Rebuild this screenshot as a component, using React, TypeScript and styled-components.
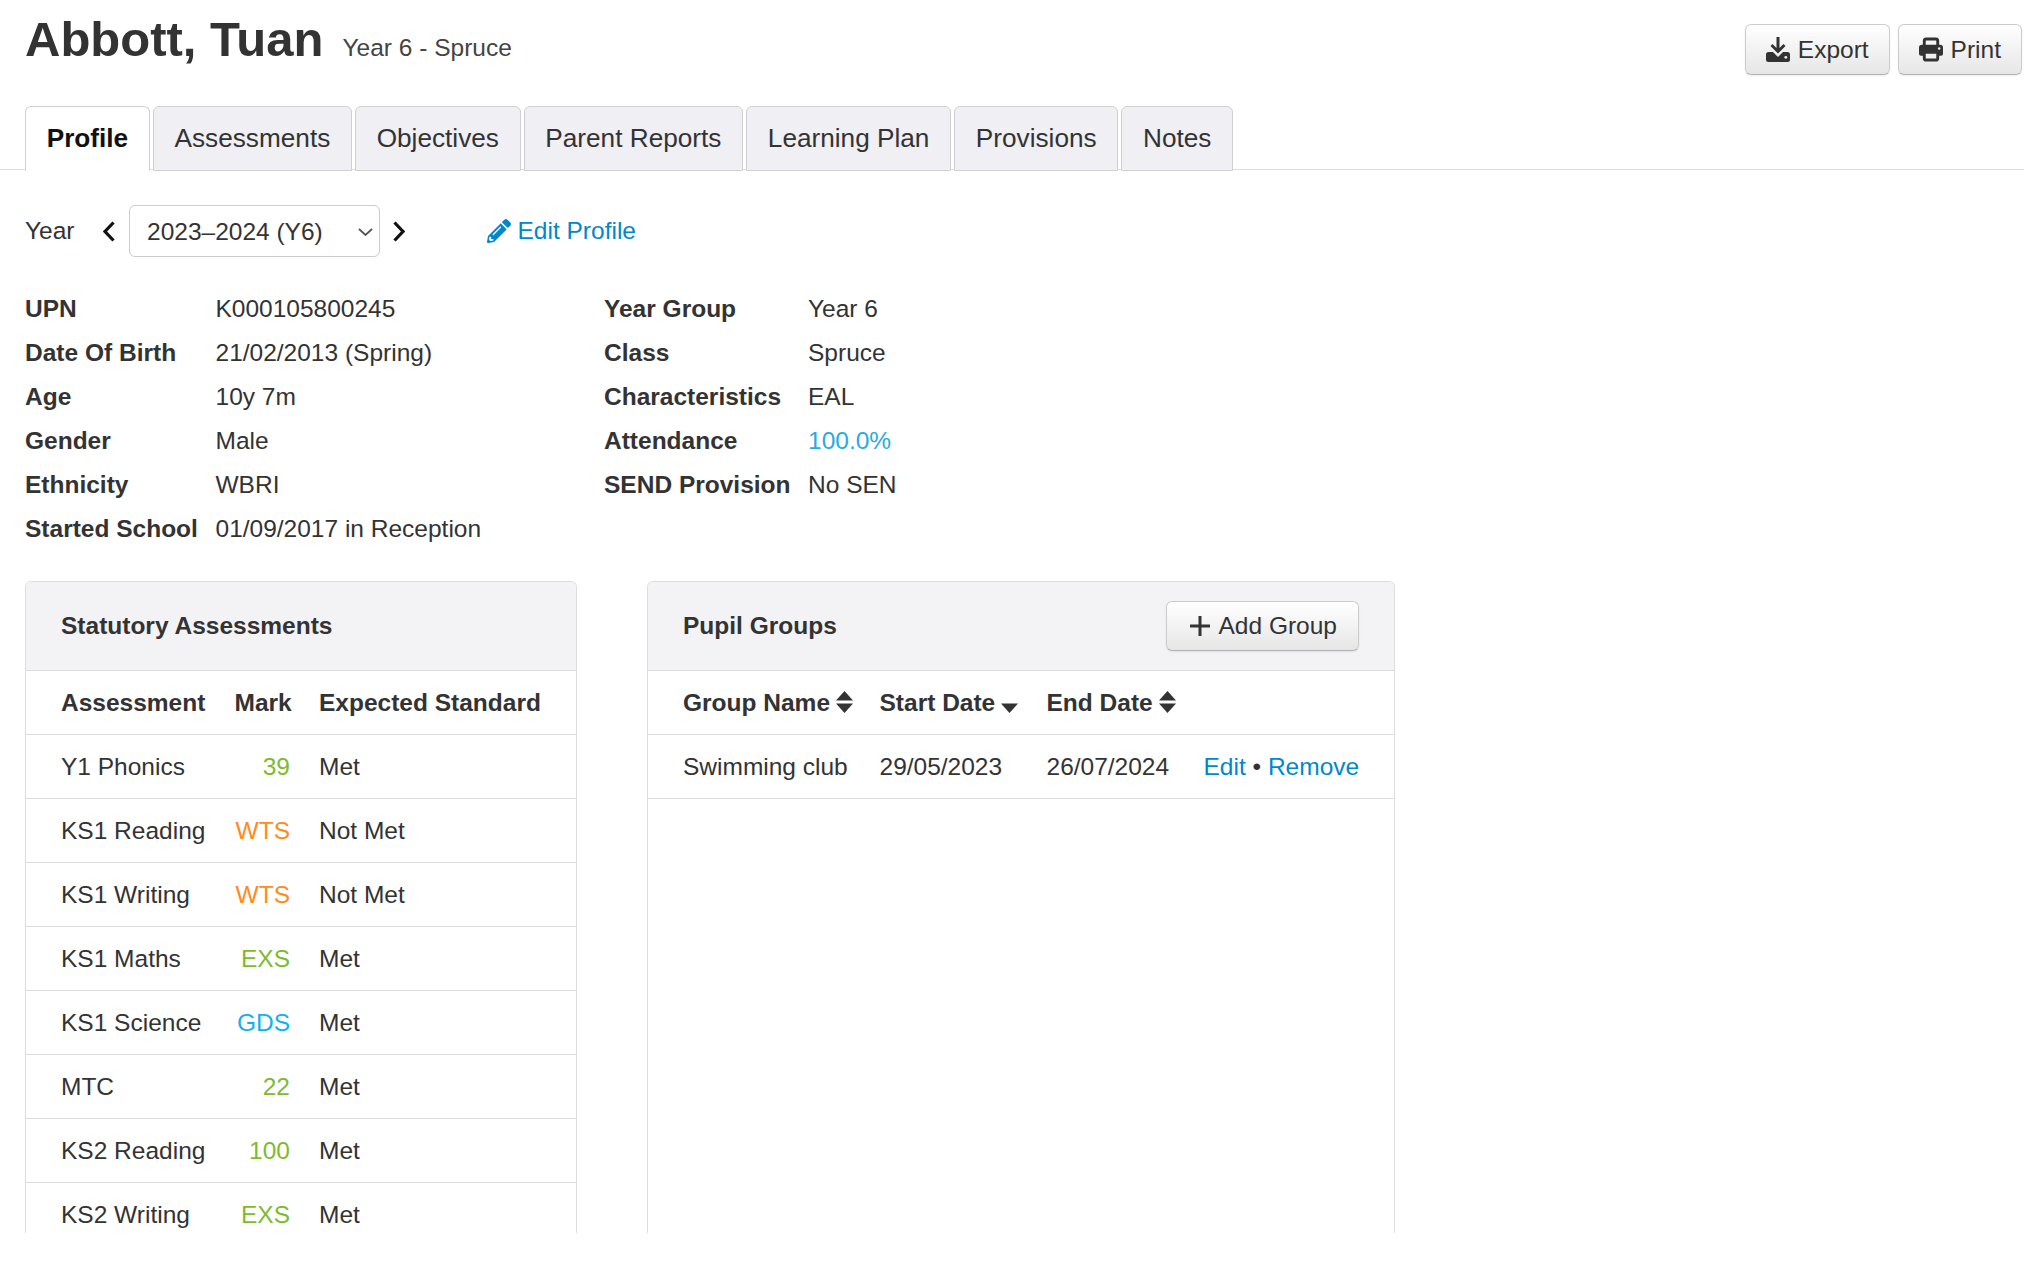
import { createGlobalStyle, styled } from "styled-components"
import { FaPencilAlt } from "react-icons/fa"

const GlobalStyle = createGlobalStyle`
  html, body {
    margin: 0;
    background: #fff;
    overflow: hidden;
  }
  body {
    font-family: "Liberation Sans", Arial, sans-serif;
    font-size: 24.5px;
    color: #333;
  }
`

const tabs = ["Profile", "Assessments", "Objectives", "Parent Reports", "Learning Plan", "Provisions", "Notes"]

const leftInfo = [
  ["UPN", "K000105800245"],
  ["Date Of Birth", "21/02/2013 (Spring)"],
  ["Age", "10y 7m"],
  ["Gender", "Male"],
  ["Ethnicity", "WBRI"],
  ["Started School", "01/09/2017 in Reception"],
]

const rightInfo = [
  ["Year Group", "Year 6"],
  ["Class", "Spruce"],
  ["Characteristics", "EAL"],
  ["Attendance", "100.0%"],
  ["SEND Provision", "No SEN"],
]

const assessments = [
  { name: "Y1 Phonics", mark: "39", tone: "green", standard: "Met" },
  { name: "KS1 Reading", mark: "WTS", tone: "orange", standard: "Not Met" },
  { name: "KS1 Writing", mark: "WTS", tone: "orange", standard: "Not Met" },
  { name: "KS1 Maths", mark: "EXS", tone: "green", standard: "Met" },
  { name: "KS1 Science", mark: "GDS", tone: "blue", standard: "Met" },
  { name: "MTC", mark: "22", tone: "green", standard: "Met" },
  { name: "KS2 Reading", mark: "100", tone: "green", standard: "Met" },
  { name: "KS2 Writing", mark: "EXS", tone: "green", standard: "Met" },
]

const DownloadIcon = () => (
  <svg width="24" height="25" viewBox="0 0 24 25">
    <path fill="currentColor" d="M10.5 0h3v11l4-4 2 2-7.5 7.5L4.5 9l2-2 4 4z" />
    <path fill="currentColor" d="M2.5 15H7l5 5 5-5h4.5a2.5 2.5 0 0 1 2.5 2.5v5a2.5 2.5 0 0 1-2.5 2.5h-19A2.5 2.5 0 0 1 0 22.5v-5A2.5 2.5 0 0 1 2.5 15z" />
    <circle cx="19.8" cy="20.3" r="1.4" fill="#f2f2f2" />
  </svg>
)

const PrintIcon = () => (
  <svg width="24" height="25" viewBox="0 0 25 25">
    <path fill="none" stroke="currentColor" strokeWidth="3" d="M5.5 9V3.5a2 2 0 0 1 2-2h10a2 2 0 0 1 2 2V9" />
    <path fill="currentColor" d="M3 7.5h19a3 3 0 0 1 3 3V17a2 2 0 0 1-2 2H2a2 2 0 0 1-2-2v-6.500a3 3 0 0 1 3-3z" />
    <path fill="#f0f0f0" stroke="currentColor" strokeWidth="3" d="M5.500 15.500h14v6a2 2 0 0 1-2 2h-10a2 2 0 0 1-2-2z" />
    <circle cx="21" cy="11.500" r="1.300" fill="#f0f0f0" />
  </svg>
)

const PlusIcon = () => (
  <svg width="20" height="20" viewBox="0 0 20 20">
    <path stroke="currentColor" strokeWidth="3" d="M0 10h20M10 0v20" />
  </svg>
)

const Chevron = ({ dir }: { dir: "left" | "right" }) => (
  <svg width="12" height="21" viewBox="0 0 12 21">
    <polyline
      fill="none"
      stroke="#111"
      strokeWidth="3.2"
      points={dir === "left" ? "10.5,1.5 2,10.5 10.5,19.5" : "1.5,1.5 10,10.5 1.5,19.5"}
    />
  </svg>
)

const SortIcon = ({ only }: { only?: boolean }) => (
  <SortSvg width="17" height="22" viewBox="0 0 17 22">
    {!only && <path fill="#333" d="M8.500 0l8.500 9.500H0z" />}
    <path fill="#333" d="M0 12.500h17L8.500 22z" />
  </SortSvg>
)

export default function App() {
  return (
    <Page>
      <GlobalStyle />
      <Header>
        <Title>Abbott, Tuan</Title>
        <Subtitle>Year 6 - Spruce</Subtitle>
        <Actions>
          <Button><DownloadIcon />Export</Button>
          <Button><PrintIcon />Print</Button>
        </Actions>
      </Header>

      <TabBar>
        {tabs.map((tab, index) => (
          <Tab key={tab} $active={index === 0}>{tab}</Tab>
        ))}
      </TabBar>

      <YearRow>
        <YearLabel>Year</YearLabel>
        <Chevron dir="left" />
        <SelectWrap>
          <YearSelect defaultValue="2023">
            <option value="2023">2023–2024 (Y6)</option>
          </YearSelect>
          <SelectArrow width="15" height="8" viewBox="0 0 15 8">
            <polyline fill="none" stroke="#555" strokeWidth="1.8" points="1,1 7.500,7 14,1" />
          </SelectArrow>
        </SelectWrap>
        <Chevron dir="right" />
        <EditLink href="#"><FaPencilAlt size={24} />Edit Profile</EditLink>
      </YearRow>

      <InfoRow>
        <InfoList $labelWidth={190.5} $width={579}>
          {leftInfo.map(([label, value]) => (
            <InfoItem key={label}>
              <dt>{label}</dt>
              <dd>{value}</dd>
            </InfoItem>
          ))}
        </InfoList>
        <InfoList $labelWidth={204}>
          {rightInfo.map(([label, value]) => (
            <InfoItem key={label}>
              <dt>{label}</dt>
              <dd>{label === "Attendance" ? <Attendance>{value}</Attendance> : value}</dd>
            </InfoItem>
          ))}
        </InfoList>
      </InfoRow>

      <Panels>
        <Panel $width={552}>
          <PanelHeader>
            <PanelTitle>Statutory Assessments</PanelTitle>
          </PanelHeader>
          <AssessmentTable>
            <thead>
              <tr>
                <th>Assessment</th>
                <th>Mark</th>
                <th>Expected Standard</th>
              </tr>
            </thead>
            <tbody>
              {assessments.map((row) => (
                <tr key={row.name}>
                  <td>{row.name}</td>
                  <td><Mark $tone={row.tone}>{row.mark}</Mark></td>
                  <td>{row.standard}</td>
                </tr>
              ))}
            </tbody>
          </AssessmentTable>
        </Panel>

        <Panel $width={748}>
          <PanelHeader>
            <PanelTitle>Pupil Groups</PanelTitle>
            <AddButton><PlusIcon />Add Group</AddButton>
          </PanelHeader>
          <GroupTable>
            <thead>
              <tr>
                <th>Group Name<SortIcon /></th>
                <th>Start Date<SortIcon only /></th>
                <th>End Date<SortIcon /></th>
                <th></th>
              </tr>
            </thead>
            <tbody>
              <tr>
                <td>Swimming club</td>
                <td>29/05/2023</td>
                <td>26/07/2024</td>
                <td><TableLink href="#">Edit</TableLink> • <TableLink href="#">Remove</TableLink></td>
              </tr>
            </tbody>
          </GroupTable>
        </Panel>
      </Panels>
    </Page>
  )
}

const Page = styled.div`
  height: 1233px;
  display: flex;
  flex-direction: column;
  overflow: hidden;
`

const Header = styled.header`
  display: flex;
  align-items: baseline;
  height: 106px;
  padding: 9px 2px 0 25px;
  box-sizing: border-box;
`

const Title = styled.h1`
  margin: 0;
  font-size: 49px;
  line-height: 60px;
  font-weight: 700;
  color: #333;
`

const Subtitle = styled.span`
  margin-left: 19px;
  font-size: 24.5px;
  color: #444;
`

const Actions = styled.div`
  display: flex;
  gap: 8px;
  margin-left: auto;
  align-self: flex-start;
  margin-top: 15px;
`

const Button = styled.button`
  display: flex;
  align-items: center;
  gap: 8px;
  height: 51px;
  padding: 0 20px;
  border: 1px solid #ccc;
  border-bottom-color: #b3b3b3;
  border-radius: 6px;
  background: linear-gradient(#fff, #e6e6e6);
  box-shadow: 0 1px 2px rgba(0, 0, 0, 0.08);
  font: inherit;
  color: #333;
`

const TabBar = styled.nav`
  display: flex;
  gap: 3px;
  height: 63px;
  padding-left: 25px;
  border-bottom: 1px solid #ddd;
  flex-shrink: 0;
`

const Tab = styled.div<{ $active?: boolean }>`
  display: flex;
  align-items: center;
  height: 65px;
  box-sizing: border-box;
  padding: 0 20.7px;
  border: 1px solid #d0d0d4;
  border-bottom-color: ${(p) => (p.$active ? "#fff" : "#d0d0d4")};
  border-radius: 6px 6px 0 0;
  background: ${(p) => (p.$active ? "#fff" : "#efeff4")};
  font-size: 26.2px;
  font-weight: ${(p) => (p.$active ? 700 : 400)};
  color: ${(p) => (p.$active ? "#111" : "#333")};
`

const YearRow = styled.div`
  display: flex;
  align-items: center;
  height: 52px;
  margin-top: 35px;
  padding-left: 25px;
  flex-shrink: 0;
`

const YearLabel = styled.span`
  width: 78px;
`

const SelectWrap = styled.div`
  position: relative;
  width: 251px;
  height: 52px;
  margin: 0 13px 0 14px;
`

const YearSelect = styled.select`
  appearance: none;
  width: 100%;
  height: 100%;
  padding: 0 17px;
  border: 1px solid #ccc;
  border-radius: 6px;
  background: #fff;
  font: inherit;
  color: #333;
`

const SelectArrow = styled.svg`
  position: absolute;
  top: 23px;
  right: 7px;
  pointer-events: none;
`

const EditLink = styled.a`
  display: flex;
  align-items: center;
  gap: 6.5px;
  margin-left: 82px;
  color: #0088cc;
  text-decoration: none;
`

const InfoRow = styled.div`
  display: flex;
  margin-top: 30px;
  padding-left: 25px;
  flex-shrink: 0;
`

const InfoList = styled.dl<{ $labelWidth: number; $width?: number }>`
  display: grid;
  grid-template-columns: ${(p) => p.$labelWidth}px auto;
  grid-auto-rows: 44px;
  align-content: start;
  margin: 0;
  ${(p) => (p.$width ? `width: ${p.$width}px;` : "")}
`

const InfoItem = styled.div`
  display: contents;

  dt {
    align-self: center;
    font-weight: 700;
  }
  dd {
    align-self: center;
    margin: 0;
  }
`

const Attendance = styled.span`
  color: #29abe2;
`

const Panels = styled.div`
  display: flex;
  gap: 70px;
  flex: 1;
  min-height: 0;
  margin-top: 30px;
  padding-left: 25px;
`

const Panel = styled.section<{ $width: number }>`
  width: ${(p) => p.$width}px;
  box-sizing: border-box;
  border: 1px solid #ddd;
  border-bottom: 0;
  border-radius: 6px 6px 0 0;
  overflow: hidden;
`

const PanelHeader = styled.div`
  display: flex;
  align-items: center;
  justify-content: space-between;
  height: 89px;
  box-sizing: border-box;
  padding: 0 35px;
  background: #f3f3f5;
  border-bottom: 1px solid #ddd;
`

const PanelTitle = styled.h3`
  margin: 0;
  font-size: 24.5px;
  font-weight: 700;
`

const AddButton = styled(Button)`
  height: 50px;
  gap: 9px;
  padding: 0 21px 0 23px;
`

const BaseTable = styled.table`
  width: 100%;
  table-layout: fixed;
  border-collapse: separate;
  border-spacing: 0;

  th, td {
    height: 64px;
    box-sizing: border-box;
    padding: 1px 14.5px 0;
    border-bottom: 1px solid #ddd;
    text-align: left;
    white-space: nowrap;
  }
  th {
    font-weight: 700;
  }
  th:first-child, td:first-child {
    padding-left: 35px;
  }
`

const AssessmentTable = styled(BaseTable)`
  th:nth-child(1) { width: 194px; }
  th:nth-child(2) { width: 84.5px; }
  th:nth-child(2), td:nth-child(2) {
    text-align: right;
  }
`

const GroupTable = styled(BaseTable)`
  th:nth-child(1) { width: 217px; }
  th:nth-child(2) { width: 167px; }
  th:nth-child(3) { width: 157px; }
  td:nth-child(4) {
    padding-right: 35px;
    text-align: right;
  }
`

const Mark = styled.span<{ $tone: string }>`
  color: ${(p) => (p.$tone === "green" ? "#7dbb2e" : p.$tone === "orange" ? "#ff8a1e" : "#10b0f5")};
`

const SortSvg = styled.svg`
  margin-left: 6px;
  vertical-align: -2px;
`

const TableLink = styled.a`
  color: #0088cc;
  text-decoration: none;
`
